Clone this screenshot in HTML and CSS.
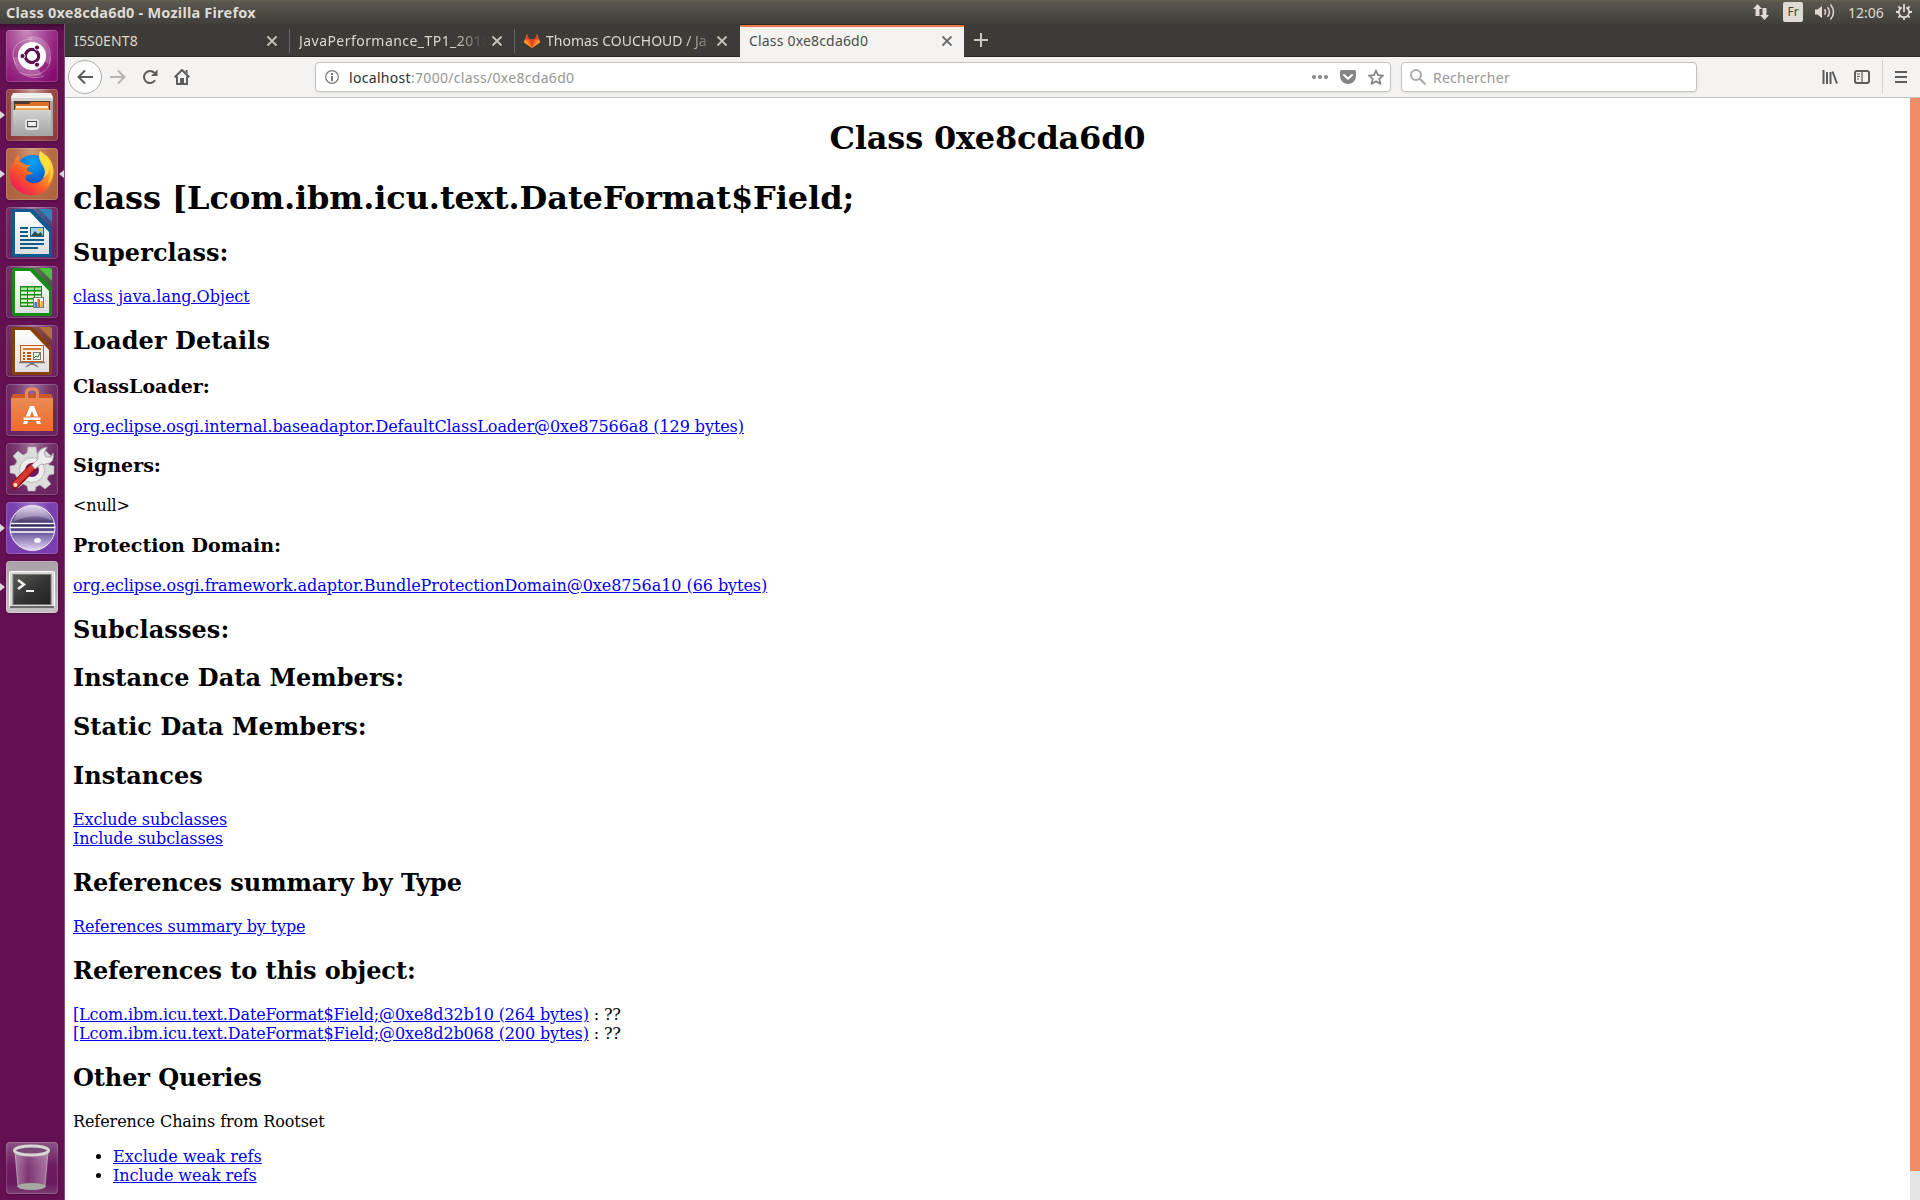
FILE: index.html
```html
<!DOCTYPE html>
<html lang="fr">
<head>
<meta charset="utf-8">
<title>Class 0xe8cda6d0</title>
<link rel="stylesheet" href="styles.css">
</head>
<body>
<svg width="0" height="0" class="defs">
  <defs>
    <linearGradient id="gloss" x1="0" y1="0" x2="0" y2="1"><stop offset="0" stop-color="#d2d2d2"/><stop offset="1" stop-color="#a4a4a4"/></linearGradient>
    <linearGradient id="paper" x1="0" y1="0" x2="0" y2="1"><stop offset="0" stop-color="#fff"/><stop offset="1" stop-color="#dedede"/></linearGradient>
    <linearGradient id="bag" x1="0" y1="0" x2="0" y2="1"><stop offset="0" stop-color="#e98b52"/><stop offset="1" stop-color="#f06a2c"/></linearGradient>
    <linearGradient id="fox" x1="1" y1="0" x2="0.2" y2="1"><stop offset="0" stop-color="#fff14a"/><stop offset="0.35" stop-color="#ffb02a"/><stop offset="0.65" stop-color="#ff5a26"/><stop offset="1" stop-color="#e8155c"/></linearGradient>
    <radialGradient id="globe" cx="0.5" cy="0.2" r="0.9"><stop offset="0" stop-color="#0aa5f5"/><stop offset="0.6" stop-color="#0a5ccd"/><stop offset="1" stop-color="#2a2a8a"/></radialGradient>
    <linearGradient id="orb" x1="0" y1="0" x2="0" y2="1"><stop offset="0" stop-color="#d9d0e6"/><stop offset="0.22" stop-color="#8d78ac"/><stop offset="0.42" stop-color="#302158"/><stop offset="0.6" stop-color="#6c589c"/><stop offset="1" stop-color="#e3d8f2"/></linearGradient>
    <linearGradient id="screen" x1="0" y1="0" x2="1" y2="1"><stop offset="0" stop-color="#5d5d5a"/><stop offset="0.5" stop-color="#353535"/><stop offset="1" stop-color="#222"/></linearGradient>
    <linearGradient id="glass" x1="0" y1="0" x2="1" y2="0"><stop offset="0" stop-color="#fff" stop-opacity="0.4"/><stop offset="0.4" stop-color="#fff" stop-opacity="0.12"/><stop offset="1" stop-color="#fff" stop-opacity="0.4"/></linearGradient>
  </defs>
</svg>

<header class="panel">
  <span class="panel-title">Class 0xe8cda6d0 - Mozilla Firefox</span>
  <div class="indicators">
    <svg class="ind-net" width="18" height="18" viewBox="0 0 18 18"><path d="M5.500 1 10 6H7.500v7h-4V6H1zM12.500 17 8 12h2.500V5h4v7H17z" fill="#dfdbd2"/></svg>
    <span class="ind-kbd">Fr</span>
    <svg class="ind-sound" width="20" height="18" viewBox="0 0 20 18"><path d="M0 6.500h2.500L7 3v12l-4.500-3.500H0z" fill="#dfdbd2"/><path d="M9.500 6.300q2 2.700 0 5.400M12.500 4.200q4 4.800 0 9.600M15.500 1.500q6 7.500 0 15" fill="none" stroke="#dfdbd2" stroke-width="1.500"/></svg>
    <span class="ind-clock">12:06</span>
    <svg class="ind-gear" width="16" height="16" viewBox="0 0 16 16"><g stroke="#dfdbd2" fill="none" stroke-width="1.800"><path d="M5.700 3.400a5.200 5.200 0 1 0 4.600 0M8 0v8M8 13.500V16M0 8h2.500M13.500 8H16M2.300 2.300l2 2M13.700 2.300l-2 2M2.300 13.700l2-2M13.700 13.700l-2-2"/></g></svg>
  </div>
</header>

<div class="desktop">
  <nav class="launcher">
    <div class="tile tile-dash"><svg viewBox="0 0 52 52"><g fill="none" stroke="#fff" stroke-opacity=".35" stroke-width="1"><path d="M21 8C34 3 49 15 43 34M44 27C46 42 28 50 13 42M11 36C3 24 7 10 26 9M8 27C8 44 25 51 38 46"/></g><path d="M23 8C36 5 48 18 42 34L36 29C39 20 33 13 23 13zM9 27C8 42 25 50 36 45L32 38C22 41 14 36 13 27z" fill="#fff" opacity=".22"/><circle cx="26" cy="26" r="14" fill="#fff"/><circle cx="26" cy="26" r="6.700" fill="none" stroke="#5d0d50" stroke-width="3.200"/><g fill="#5d0d50" stroke="#fff" stroke-width="1"><circle cx="16.500" cy="26" r="2.600"/><circle cx="31" cy="17.500" r="2.600"/><circle cx="31" cy="34.700" r="2.600"/></g></svg></div>
    <div class="tile tile-files running"><svg viewBox="0 0 52 52"><path d="M5 9q0-4 4-4h34q4 0 4 4v10H5z" fill="#d2d1cf"/><path d="M7 4h38l2 5H5z" fill="#f0f0ee"/><path d="M8 12h36v10H8z" fill="#4a3a30"/><path d="M9 15h14l2-2h18v9H9z" fill="#e06f28"/><path d="M10 17h32v2H10z" fill="#fff0d9"/><path d="M9 19h34v3H9z" fill="#f4a34f"/><path d="M5 12h3v9h36v-9h3v35H5z" fill="#a7a6a5"/><path d="M7 21h38v25H7z" fill="url(#gloss)"/><rect x="20" y="31" width="12" height="9" rx="2" fill="#b7b7b7" stroke="#e4e4e4" stroke-width="2"/><rect x="21.500" y="32.500" width="9" height="5" fill="#eee" stroke="#444"/></svg></div>
    <div class="tile tile-firefox running focused"><svg viewBox="0 0 52 52"><circle cx="27" cy="25" r="18" fill="url(#globe)"/><path d="M34 3C31 14 44 17 38 29c-3 6-10 8-17 4-2-2-2-4 0-6 2-1 5 0 6-2l-6-2 0-3 4-3c-4 1-7-1-8-2-4-1-5-4-4-8-3 2-4 4-5 7-6 8-6 20 2 27 9 8 23 8 31 0 8-9 9-22 2-31-3-3-5-4-9-7z" fill="url(#fox)"/><path d="M34 3C29 15 44 19 37 30c5-3 7-8 6-13 4 8 1 16-3 21 11-10 8-24-6-35z" fill="#ffe33b" opacity=".85"/></svg></div>
    <div class="tile tile-writer"><svg viewBox="0 0 52 52"><path d="M6 3q0-1 1-1h20l19 20v26q0 2-2 2H8q-2 0-2-2z" fill="#0d5b91"/><path d="M9 5h15l19 20v22H9z" fill="url(#paper)"/><path d="M27 2h17q2 0 2 2v18z" fill="#1a5f93" opacity=".55"/><path d="M33 2h11q2 0 2 2v11z" fill="#2e84b9"/><g stroke="#115b88" stroke-width="2"><path d="M14 21h8M14 25h8M14 29h8M14 33h24M14 37h24M14 41h18"/></g><rect x="24.500" y="20.500" width="13" height="9" fill="#9fd3f1" stroke="#176395"/><path d="m25 29 4-5 3 3 3-2 2 4z" fill="#324f45"/><circle cx="34" cy="23" r="1.500" fill="#ffbf24"/></svg></div>
    <div class="tile tile-calc"><svg viewBox="0 0 52 52"><path d="M6 3q0-1 1-1h20l19 20v26q0 2-2 2H8q-2 0-2-2z" fill="#168a16"/><path d="M9 5h15l19 20v22H9z" fill="url(#paper)"/><path d="M27 2h17q2 0 2 2v18z" fill="#2a7d22" opacity=".55"/><path d="M33 2h11q2 0 2 2v11z" fill="#4bc13f"/><path d="M14 20h22v21H14z" fill="#168a16"/><g fill="#a6ec98"><path d="M15 21.500h6v2.500h-6zm7 0h6v2.500h-6zm7 0h6v2.500h-6z"/></g><g fill="#d9f5d1"><path d="M15 25.500h6v2.500h-6zm7 0h6v2.500h-6zm7 0h6v2.500h-6zm-14 4h6v2.500h-6zm7 0h6v2.500h-6zm7 0h6v2.500h-6zm-14 4h6v2.500h-6zm7 0h6v2.500h-6zm-7 4h6v2h-6zm7 0h6v2h-6z"/></g><rect x="27.500" y="31.500" width="10" height="10" fill="#fff" stroke="#777"/><path d="M28.500 36h2.500v5h-2.500z" fill="#2a7fc5"/><path d="M31.500 33H34v8h-2.500z" fill="#e3631f"/><path d="M34.500 35H37v6h-2.500z" fill="#f5b52b"/></svg></div>
    <div class="tile tile-impress"><svg viewBox="0 0 52 52"><path d="M6 3q0-1 1-1h20l19 20v26q0 2-2 2H8q-2 0-2-2z" fill="#87400d"/><path d="M9 5h15l19 20v22H9z" fill="url(#paper)"/><path d="M27 2h17q2 0 2 2v18z" fill="#7a3a18" opacity=".55"/><path d="M33 2h11q2 0 2 2v11z" fill="#b2703c"/><rect x="14.500" y="20.500" width="23" height="16" fill="#fff0e2" stroke="#c35b22"/><path d="M17 24h18" stroke="#d57538" stroke-width="2"/><path d="M17 28h2m-2 3h2m-2 3h2m2-6h4m-4 3h4m-4 3h4" stroke="#ba521d" stroke-width="2"/><rect x="27.500" y="27.500" width="7" height="7" fill="#e5f4df" stroke="#777"/><path d="m28 33 2-2 2 1 2-4" stroke="#25863b" fill="none"/><path d="M13 37.500h26M26 38v2m0-2-6 4m6-4 6 4" fill="none" stroke="#777" stroke-width="1.500"/></svg></div>
    <div class="tile tile-store"><svg viewBox="0 0 52 52"><path d="M7 10h38l2 4H5z" fill="#ca5b29"/><path d="M5 14h42v33H5z" fill="url(#bag)"/><path d="M20.500 17V9q0-4 4-4h3q4 0 4 4v8" fill="none" stroke="#e9895b" stroke-width="3"/><path d="m17 40 7-18h4l7 18h-4l-5-13-5 13z" fill="#fff"/><path d="M17 33h18v3.500H17z" fill="#fff" stroke="#ee7436"/></svg></div>
    <div class="tile tile-settings"><svg viewBox="0 0 52 52"><g fill="#dcdcdc" stroke="#aaa" stroke-width=".5"><path d="m22 4 8 0 1 6 4 2 5-4 5 5-4 5 2 4 5 1v8l-5 1-2 4 4 5-6 5-5-4-4 2-1 4h-7l-1-5-4-2-5 4-5-5 4-5-2-4-5-1v-7l5-1 2-4-4-5 5-5 5 4 4-2z"/></g><circle cx="26" cy="27" r="12.500" fill="#eee" stroke="#bbb"/><circle cx="26" cy="27" r="7" fill="#721464"/><path d="M9 42 27 24" stroke="#8e0f10" stroke-width="8" stroke-linecap="round"/><path d="M9 41.500 27 23.500" stroke="#d83932" stroke-width="5.500" stroke-linecap="round"/><path d="m26 22 6-6q-2-10 9-12l-3 6 2 4 5 0 2-4q2 10-7 11-3 1-5 0l-6 5z" fill="#eee" stroke="#aaa"/><circle cx="9.500" cy="42" r="2" fill="#ffe0db"/></svg></div>
    <div class="tile tile-eclipse running"><svg viewBox="0 0 52 52"><circle cx="26.500" cy="26" r="22.500" fill="url(#orb)" stroke="#eee" stroke-width="1"/><path d="M7 20q4-16 20-16 14 0 19 15-16-10-39 1z" fill="#fff" opacity=".25"/><path d="M5 21.500h43M4 25.500h45M4 30h44" stroke="#fff" stroke-width="1.500"/><ellipse cx="31.500" cy="38.500" rx="3.500" ry="2.500" fill="#fff" opacity=".9"/></svg></div>
    <div class="tile tile-terminal running"><svg viewBox="0 0 52 52"><rect x="3.500" y="10.500" width="45" height="36" rx="1" fill="#d8d8d4" stroke="#fff"/><rect x="4" y="45" width="44" height="2" fill="#6e6a6c"/><rect x="7" y="13.500" width="38" height="30" fill="url(#screen)" stroke="#777"/><path d="m12 19 6 4.500-6 4.500" fill="none" stroke="#eee" stroke-width="2.500"/><path d="M20 30h8" stroke="#eee" stroke-width="2"/></svg></div>
    <div class="tile tile-trash"><svg viewBox="0 0 52 52"><path d="m9 10 3 35q14 6 27 0l3-35z" fill="url(#glass)"/><ellipse cx="25.500" cy="44.500" rx="14" ry="3.500" fill="#a7aaa4"/><path d="m9 10 3 35m30-35-3 35" stroke="#ddd" stroke-opacity=".5"/><ellipse cx="25.500" cy="8.500" rx="17" ry="4.500" fill="#7e4976" stroke="#d7d8d2" stroke-width="3"/></svg></div>
  </nav>

  <main class="browser">
    <div class="tabs">
      <div class="tab"><span class="tab-label t1">I5S0ENT8</span><svg class="close" viewBox="0 0 16 16"><path d="m3.500 3.500 9 9m0-9-9 9"/></svg></div>
      <div class="tab"><span class="tab-label t2">JavaPerformance_TP1_2018</span><svg class="close" viewBox="0 0 16 16"><path d="m3.500 3.500 9 9m0-9-9 9"/></svg></div>
      <div class="tab"><svg class="favicon" width="16" height="16" viewBox="0 0 16 16"><path d="M2.800 1 0 9.200 8 15l8-5.800L13.200 1l-2.400 5.500H5.200z" fill="#fc6d26"/><path d="M5.200 6.500h5.600L8 15z" fill="#e24329"/><path d="M1 6.500 0 9.200 8 15zM15 6.500l1 2.700L8 15z" fill="#fca326"/><path d="M2.800 1 1 6.500h4.200zM13.200 1 15 6.500h-4.200z" fill="#e24329"/></svg><span class="tab-label t3">Thomas COUCHOUD / Ja</span><svg class="close" viewBox="0 0 16 16"><path d="m3.500 3.500 9 9m0-9-9 9"/></svg></div>
      <div class="tab active"><span class="tab-label t4">Class 0xe8cda6d0</span><svg class="close" viewBox="0 0 16 16"><path d="m3.500 3.500 9 9m0-9-9 9"/></svg></div>
      <svg class="newtab" width="14" height="14" viewBox="0 0 14 14"><path d="M7 0v14M0 7h14" stroke="#cdc8c2" stroke-width="2"/></svg>
    </div>
    <div class="toolbar">
      <div class="back"><svg width="16" height="16" viewBox="0 0 16 16"><path d="M16 8H1.500M8 1.500 1.500 8 8 14.500"/></svg></div>
      <svg class="tool fwd" width="16" height="16" viewBox="0 0 16 16"><path d="M0 8h14.500M8 1.500 14.500 8 8 14.500"/></svg>
      <svg class="tool reload" width="16" height="16" viewBox="0 0 16 16"><path d="M13 11.300A6 6 0 1 1 12.500 4"/><path d="M15.500.5V7H9z" class="solid"/></svg>
      <svg class="tool home" width="16" height="16" viewBox="0 0 16 16"><path d="m.7 8.300L8 1l7.300 7.300M3 7.500V15h10V7.500"/><path d="M6 9h4v6H6z" class="solid"/><path d="M11.500 1h2v4l-2-2z" class="solid"/></svg>
      <div class="field url">
        <svg width="14" height="14" viewBox="0 0 14 14"><circle cx="7" cy="7" r="6.300" fill="none" stroke="#777" stroke-width="1.200"/><path d="M6 6h2v5H6zM6 3h2v2H6z" fill="#777"/></svg>
        <span class="address">localhost<span>:7000/class/0xe8cda6d0</span></span>
        <div class="page-actions">
          <svg width="16" height="16" viewBox="0 0 16 16"><g fill="#858585"><circle cx="2" cy="8" r="2"/><circle cx="8" cy="8" r="2"/><circle cx="14" cy="8" r="2"/></g></svg>
          <svg width="16" height="16" viewBox="0 0 16 16"><path d="M1.500 1h13Q16 1 16 2.500V7A8 8 0 0 1 0 7V2.500Q0 1 1.500 1z" fill="#858585"/><path d="m4 6 4 3.800L12 6" fill="none" stroke="#fff" stroke-width="2" stroke-linecap="round" stroke-linejoin="round"/></svg>
          <svg width="16" height="16" viewBox="0 0 16 16"><path d="m8 1.500 2 4.700 5 .4-3.800 3.300 1.200 5L8 12.200l-4.400 2.700 1.200-5L1 6.600l5-.4z" fill="none" stroke="#858585" stroke-width="1.800" stroke-linejoin="round"/></svg>
        </div>
      </div>
      <div class="field search">
        <svg width="16" height="16" viewBox="0 0 16 16"><circle cx="6" cy="6" r="5" fill="none" stroke="#aaa" stroke-width="2"/><path d="m9.500 9.500 6 6" stroke="#aaa" stroke-width="2"/></svg>
        <span>Rechercher</span>
      </div>
      <div class="tools-right">
        <svg width="16" height="16" viewBox="0 0 16 16"><path d="M1.500 1v14M5 3v12M8.500 3v12M10.500 2.500l4.500 12" stroke="#5c5c5c" stroke-width="2"/></svg>
        <svg width="16" height="16" viewBox="0 0 16 16"><rect x="1" y="2" width="14" height="12" rx="2" fill="none" stroke="#5c5c5c" stroke-width="2"/><path d="M8 2v12M3 5h3M3 7.500h3M3 10h2" stroke="#5c5c5c" stroke-width="1.200"/></svg>
        <div class="menu"><svg width="12" height="14" viewBox="0 0 12 14"><path d="M0 2h12M0 7h12M0 12h12" stroke="#5c5c5c" stroke-width="2"/></svg></div>
      </div>
    </div>
    <div class="viewport">
      <article class="page">
        <h1 class="centered">Class 0xe8cda6d0</h1>
        <h1 class="tight-1">class [Lcom.ibm.icu.text.DateFormat$Field;</h1>
        <h2 class="loose-1">Superclass:</h2>
        <a href="#">class java.lang.Object</a>
        <h2 class="loose-1">Loader Details</h2>
        <h3>ClassLoader:</h3>
        <a href="#" class="tight-1">org.eclipse.osgi.internal.baseadaptor.DefaultClassLoader@0xe87566a8 (129 bytes)</a>
        <h3>Signers:</h3>
        <span class="tight-2">&lt;null&gt;</span>
        <h3>Protection Domain:</h3>
        <a href="#" class="tight-0">org.eclipse.osgi.framework.adaptor.BundleProtectionDomain@0xe8756a10 (66 bytes)</a>
        <h2 class="loose-1">Subclasses:</h2>
        <h2 class="loose-0">Instance Data Members:</h2>
        <h2 class="loose-0">Static Data Members:</h2>
        <h2>Instances</h2>
        <a href="#" class="tight-2">Exclude subclasses</a><br>
        <a href="#" class="tight-2">Include subclasses</a><br>
        <h2 class="tight-0">References summary by Type</h2>
        <a href="#" class="tight-2">References summary by type</a>
        <h2 class="tight-0">References to this object:</h2>
        <span class="tight-2"><a href="#">[Lcom.ibm.icu.text.DateFormat$Field;@0xe8d32b10 (264 bytes)</a> : ??</span><br>
        <span class="tight-2"><a href="#">[Lcom.ibm.icu.text.DateFormat$Field;@0xe8d2b068 (200 bytes)</a> : ??</span><br>
        <h2 class="tight-1">Other Queries</h2>
        <span class="tight-1">Reference Chains from Rootset</span>
        <ul>
          <li><a href="#">Exclude weak refs</a></li>
          <li><a href="#" class="tight-0">Include weak refs</a></li>
        </ul>
      </article>
      <div class="scrollbar"><div class="thumb"></div></div>
    </div>
  </main>
</div>
</body>
</html>
```
FILE: styles.css
```css
* { box-sizing: border-box; }
body {
  margin: 0;
  width: 1920px;
  height: 1200px;
  overflow: hidden;
  display: flex;
  flex-direction: column;
  font-family: "Noto Sans", "Open Sans", sans-serif;
  font-size: 14px;
}
svg { display: block; flex: none; }
.defs { position: absolute; }

/* Top panel */
.panel {
  height: 24px;
  flex: none;
  display: flex;
  align-items: center;
  justify-content: space-between;
  padding: 0 8px 0 6px;
  color: #dfdbd2;
  background: linear-gradient(#66624f 0, #5a574e 2px, #403f3a 100%);
}
.panel-title { font-weight: bold; font-size: 14.5px; letter-spacing: .22px; line-height: 20px; margin-bottom: 1px; white-space: nowrap; }
.indicators { display: flex; align-items: center; }
.ind-kbd {
  width: 20px; height: 20px; margin-left: 13px;
  border-radius: 2px; background: #dfdbd2; color: #45433e;
  font-size: 12px; line-height: 20px; text-align: center;
}
.ind-sound { margin-left: 12px; }
.ind-clock { width: 36px; margin: 0 12px 0 13px; white-space: nowrap; }

.desktop { flex: 1; min-height: 0; display: flex; }

/* Launcher */
.launcher {
  width: 65px;
  flex: none;
  display: flex;
  flex-direction: column;
  gap: 7px;
  padding: 6px 0 6px 6px;
  background: linear-gradient(#3c0c34 0, #641053 7px, #641053 100%);
  border-right: 1px solid #8c4a7e;
}
.tile {
  width: 52px; height: 52px; flex: none;
  position: relative;
  border-radius: 4px;
  background: radial-gradient(ellipse at 50% 0, #a0709a, #7a3a70 45%, #6a2460 75%);
  box-shadow: inset 0 0 0 1px rgba(255, 255, 255, .18), 0 1px 3px rgba(0, 0, 0, .25);
}
.tile-dash { background: radial-gradient(ellipse at 40% 0, #c78abd, #a03a8c 50%, #860d70 85%); }
.tile-files { background: radial-gradient(ellipse at 50% 0, #c9a09c, #9c4c4a 50%, #8c3b40 90%); }
.tile-firefox { background: radial-gradient(ellipse at 50% 0, #cf9a78, #b76c48 50%, #ae6440 90%); }
.tile-eclipse { background: radial-gradient(ellipse at 50% 0, #a078c8, #7b42b0 50%, #7a3cae 90%); }
.tile-terminal { background: linear-gradient(#aaa0a8, #c6bfc4); }
.tile-trash { margin-top: auto; background: linear-gradient(#8b5483, #6f1c61 45%, #6a1a5e 80%, #7e3c74); }
.running::before, .focused::after {
  content: "";
  position: absolute;
  top: 22px;
  border: 4px solid transparent;
}
.running::before { left: -6px; border-left: 5px solid #dcd6da; border-right: 0; }
.focused::after { right: -6px; border-right: 5px solid #dcd6da; border-left: 0; }

/* Browser window */
.browser { flex: 1; min-width: 0; display: flex; flex-direction: column; }
.tabs {
  height: 33px; flex: none;
  display: flex;
  background: #3c3b37;
  border-bottom: 1px solid #2a2926;
  color: #dcd7d0;
}
.tab {
  width: 225px; height: 33px;
  position: relative;
  display: flex;
  align-items: center;
  padding: 0 10px 0 9px;
}
.tab:nth-child(-n+2)::after {
  content: "";
  position: absolute;
  right: 0; top: 5px;
  width: 1px; height: 24px;
  background: #6a6864;
}
.tab-label { flex: 1; min-width: 0; white-space: nowrap; }
.t1 { letter-spacing: .15px; }
.t2 {
  overflow: hidden;
  letter-spacing: .45px;
  -webkit-mask-image: linear-gradient(90deg, #000 155px, transparent 187px);
  mask-image: linear-gradient(90deg, #000 155px, transparent 187px);
}
.t3 {
  -webkit-mask-image: linear-gradient(90deg, #000 138px, transparent 172px);
  mask-image: linear-gradient(90deg, #000 138px, transparent 172px);
}
.t4 { letter-spacing: .18px; }
.close { width: 16px; height: 16px; fill: none; stroke: #c6c1bb; stroke-width: 1.8; margin-left: 3px; }
.favicon { margin-right: 6px; }
.tab.active {
  width: 224px;
  background: #f4f3f1;
  color: #4c4c4c;
  box-shadow: inset 0 1px #2a2926, inset 0 3px #f07746;
  padding-right: 9px;
}
.tab.active .close { stroke: #6b6b6b; }
.newtab { margin: 9px 0 0 10px; }

.toolbar {
  height: 41px; flex: none;
  display: flex;
  align-items: center;
  padding: 0 13px 1px 3px;
  background: #f4f3f1;
  border-bottom: 1px solid #c1bfbc;
}
.toolbar .back {
  width: 34px; height: 34px;
  display: flex; align-items: center; justify-content: center;
  border: 1px solid #b0aeab; border-radius: 50%;
  background: #fcfcfc;
}
.back svg, .tool { fill: none; stroke: #5c5c5c; stroke-width: 2; }
.tool .solid { fill: #5c5c5c; stroke: none; }
.tool.fwd { margin-left: 8px; stroke: #b7b6b4; }
.tool.reload { margin-left: 16px; }
.tool.home { margin-left: 16px; }
.field {
  height: 30px;
  display: flex;
  align-items: center;
  border: 1px solid #c4c2bf;
  border-radius: 4px;
  background: #fff;
  box-shadow: 0 1px 3px rgba(0, 0, 0, .07);
}
.url { width: 1076px; margin-left: 125px; padding: 0 6px 0 9px; }
.address { margin: 1px 0 0 10px; color: #2e2e2e; letter-spacing: .31px; white-space: nowrap; }
.address span { color: #969696; }
.page-actions { display: flex; gap: 12px; margin-left: auto; }
.search { width: 296px; margin-left: 10px; padding-left: 8px; color: #989898; }
.search span { margin: 1px 0 0 7px; letter-spacing: .25px; }
.tools-right { display: flex; align-items: center; gap: 16px; margin-left: auto; }
.menu { height: 34px; display: flex; align-items: center; padding-left: 12px; margin-left: -4px; border-left: 1px solid #d4d2cf; }

/* Page content */
.viewport { flex: 1; min-height: 0; display: flex; background: #fff; overflow: hidden; }
.page {
  flex: 1;
  padding: 0 8px;
  font-family: "DejaVu Serif", serif;
  font-size: 16px;
  color: #000;
}
.page h3 { font-size: 19px; line-height: 23px; margin: 18.72px 0; }
.page .centered { text-align: center; letter-spacing: -.2px; }
.page a { color: #00e; text-decoration: underline; }
.tight-0 { letter-spacing: -.055px; }
.tight-1 { letter-spacing: -.085px; }
.tight-2 { letter-spacing: -.13px; }
.loose-0 { letter-spacing: .04px; }
.loose-1 { letter-spacing: .08px; }
.scrollbar { width: 10px; background: #e4e4e4; }
.thumb { height: 1073px; background: #f08d67; }
```
